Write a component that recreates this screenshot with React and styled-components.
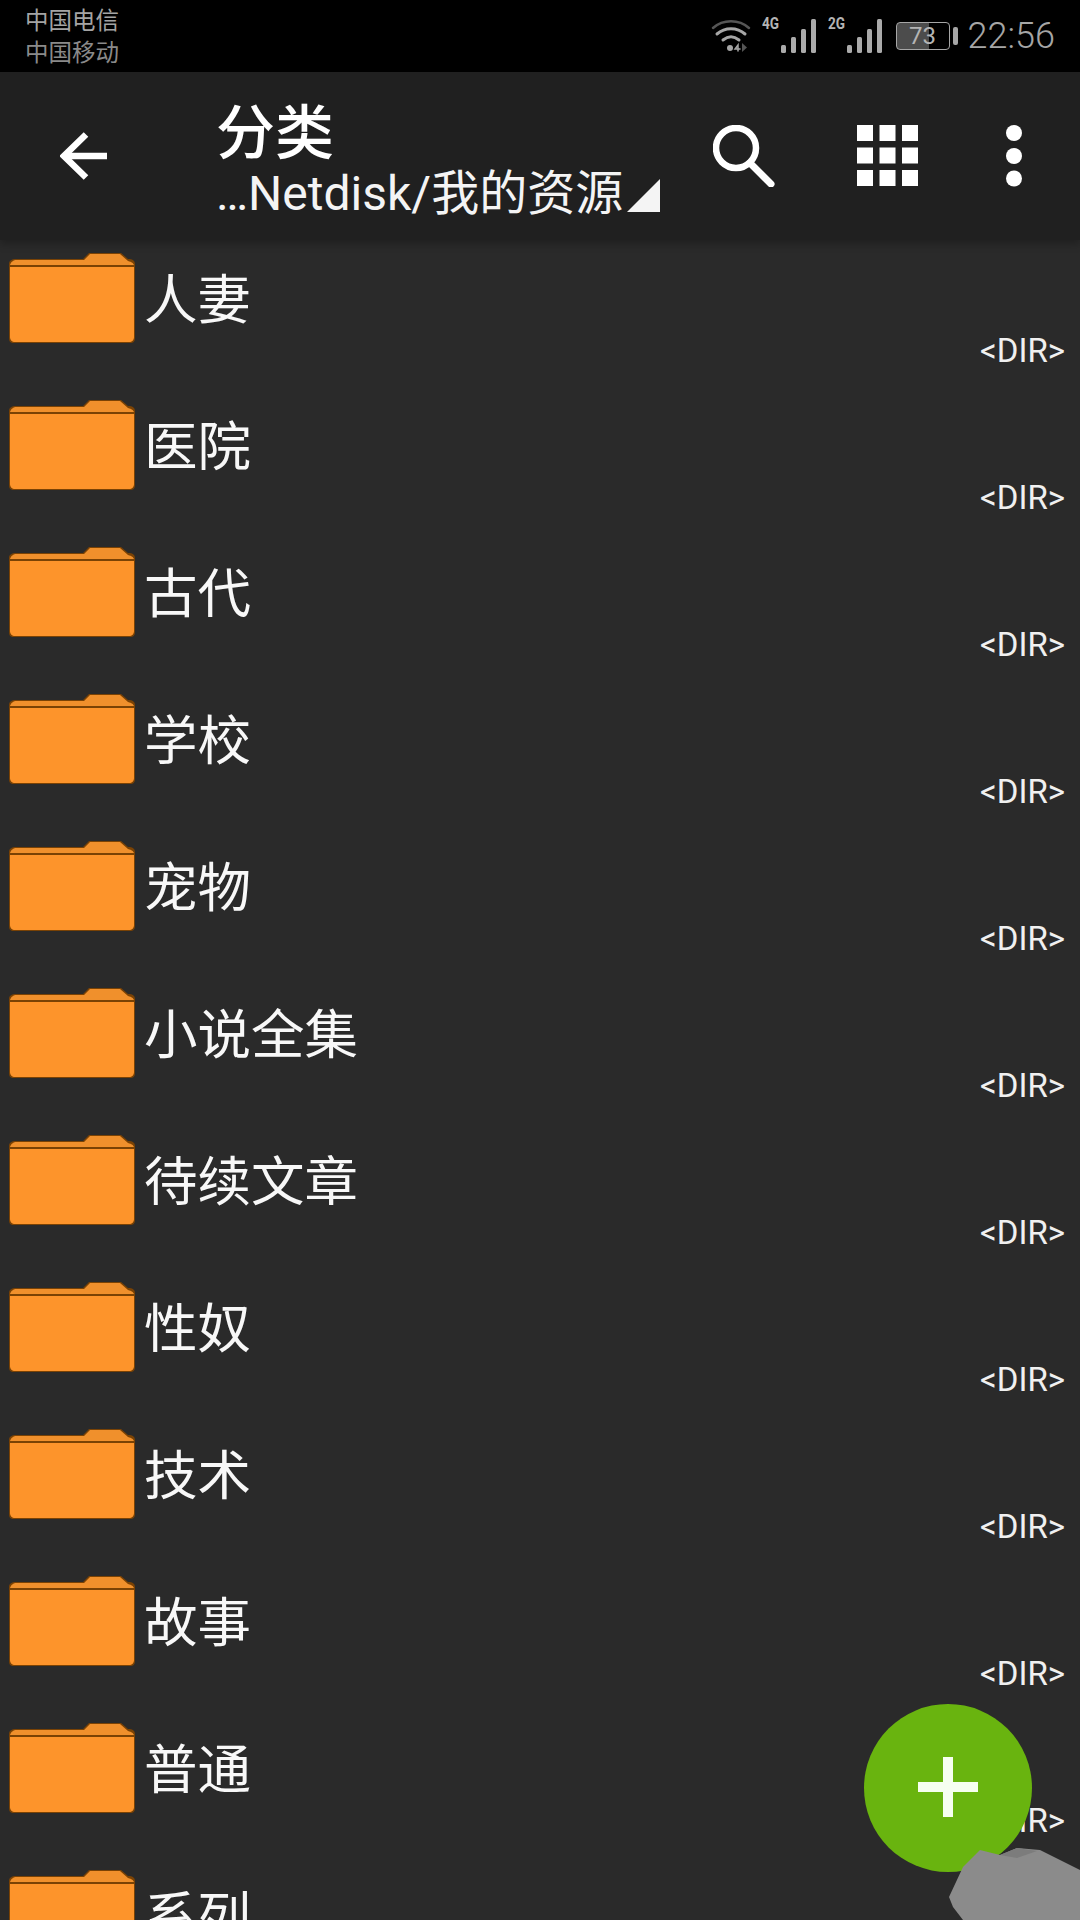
import React from 'react';
import styled, { createGlobalStyle } from 'styled-components';

const GlobalStyle = createGlobalStyle`
  html, body {
    margin: 0;
    padding: 0;
    background: #2a2a2a;
  }
  body {
    font-family: Roboto, 'Noto Sans CJK SC', sans-serif;
  }
`;

const Page = styled.div`
  position: relative;
  width: 1080px;
  height: 1920px;
  overflow: hidden;
  background: #2a2a2a;
  color: #fff;
`;

const StatusBar = styled.div`
  display: flex;
  align-items: center;
  justify-content: space-between;
  height: 72px;
  padding: 0 25px;
  background: #000;
`;

const Carriers = styled.div`
  display: flex;
  flex-direction: column;
  font-size: 23.5px;
  line-height: 32px;
  margin-top: 2px;
`;

const Carrier = styled.div`
  color: ${({ dim }) => (dim ? '#8a8a8a' : '#a4a4a4')};
`;

const StatusRight = styled.div`
  display: flex;
  align-items: center;
  color: #a6a6a6;
`;

const Signal = styled.div`
  position: relative;
  margin-left: 14px;
  margin-top: -2px;
  width: 52px;
  height: 36px;
`;

const SignalLabel = styled.span`
  position: absolute;
  top: -2px;
  left: -3px;
  font-size: 16px;
  font-weight: 700;
  line-height: 18px;
  color: #b4b4b4;
  transform: scaleX(0.85);
  transform-origin: left top;
`;

const Battery = styled.div`
  display: flex;
  align-items: center;
  margin-left: 13px;
`;

const BatteryBody = styled.div`
  width: 54px;
  height: 28px;
  box-sizing: border-box;
  border: 1px solid #a6a6a6;
  border-radius: 4px;
  display: flex;
  align-items: center;
  justify-content: center;
  font-size: 24px;
  color: #b4b4b4;
  background: linear-gradient(90deg, #4c4c4c 0, #4c4c4c 62%, transparent 62%);
`;

const BatteryTip = styled.div`
  width: 5px;
  height: 18px;
  margin-left: 3px;
  border-radius: 2px;
  background: #a6a6a6;
`;

const Clock = styled.div`
  margin-left: 10px;
  font-size: 36px;
  font-weight: 300;
  line-height: 40px;
`;

const Toolbar = styled.div`
  position: relative;
  z-index: 1;
  display: flex;
  align-items: center;
  height: 168px;
  background: #202020;
  box-shadow: 0 4px 8px rgba(0, 0, 0, 0.25);
`;

const BackButton = styled.div`
  display: flex;
  justify-content: center;
  width: 168px;
  margin-bottom: 1px;
`;

const Titles = styled.div`
  display: flex;
  flex-direction: column;
  flex: 1;
  min-width: 0;
  margin-left: 48px;
  margin-top: 9px;
`;

const Title = styled.div`
  font-size: 59px;
  font-weight: 500;
  line-height: 67px;
`;

const PathRow = styled.div`
  display: flex;
  align-items: flex-end;
  font-size: 48px;
  line-height: 54px;
  white-space: nowrap;
  color: #f4f4f4;
`;

const Triangle = styled.div`
  flex: none;
  width: 0;
  height: 0;
  margin: 0 0 9px 4px;
  border-style: solid;
  border-width: 0 0 33px 33px;
  border-color: transparent transparent #f4f4f4 transparent;
`;

const Actions = styled.div`
  display: flex;
  align-items: center;
`;

const ActionButton = styled.div`
  display: flex;
  justify-content: center;
  width: ${({ w }) => w}px;
`;

const List = styled.div`
  display: flex;
  flex-direction: column;
`;

const Row = styled.div`
  position: relative;
  display: flex;
  flex: none;
  height: 147px;
  box-sizing: border-box;
  padding: 12px 15px 0 8px;
`;

const FolderSlot = styled.div`
  flex: none;
  width: 128px;
  height: 92px;
`;

const Name = styled.div`
  flex: 1;
  margin: 11px 0 0 8px;
  font-size: 53.5px;
  line-height: 76px;
  color: #f8f8f8;
`;

const DirTag = styled.div`
  align-self: flex-start;
  margin-top: 81px;
  font-size: 33px;
  line-height: 36px;
  color: #f0f0f0;
`;

const Fab = styled.div`
  position: absolute;
  left: 864px;
  top: 1704px;
  width: 168px;
  height: 168px;
  border-radius: 50%;
  background: #69b40f;
  display: flex;
  align-items: center;
  justify-content: center;
`;

const Smudge = styled.svg`
  position: absolute;
  left: 945px;
  top: 1840px;
`;

const BackIcon = () => (
  <svg width="48" height="48" viewBox="0 0 48 48" fill="none" stroke="#fff" strokeWidth="6.5">
    <path d="M47 24H4" />
    <path d="M26 2.5L4 24l22 21.5" />
  </svg>
);

const SearchIcon = () => (
  <svg width="62" height="62" viewBox="0 0 62 62" fill="none" stroke="#fff">
    <circle cx="23" cy="23" r="20" strokeWidth="6.5" />
    <path d="M37 38l21 21" strokeWidth="7" strokeLinecap="round" />
  </svg>
);

const GridIcon = () => (
  <svg width="62" height="62" viewBox="0 0 62 62" fill="#fff">
    {[0, 22.5, 45].map((y) =>
      [0, 22.5, 45].map((x) => <rect key={`${x}-${y}`} x={x} y={y} width="16" height="16" />)
    )}
  </svg>
);

const MoreIcon = () => (
  <svg width="16" height="62" viewBox="0 0 16 62" fill="#fff">
    <circle cx="8" cy="8" r="8" />
    <circle cx="8" cy="31" r="8" />
    <circle cx="8" cy="53.5" r="8" />
  </svg>
);

const PlusIcon = () => (
  <svg width="62" height="62" viewBox="0 0 62 62" fill="#f6fff0">
    <rect x="26" y="0" width="10" height="60" />
    <rect x="1" y="25" width="60" height="10" />
  </svg>
);

const WifiIcon = () => (
  <svg width="40" height="34" viewBox="0 0 40 34" fill="none" stroke="#a6a6a6" strokeLinecap="round">
    <path d="M2 9C12 0 28 0 38 9" strokeWidth="2.5" stroke="#555" />
    <path d="M6 15c8-7 20-7 28 0" strokeWidth="3" />
    <path d="M12 21c5-4 11-4 16 0" strokeWidth="3" />
    <circle cx="19" cy="29" r="3" fill="#a6a6a6" stroke="none" />
    <path d="M31 24v9l5-4.5z" fill="#555" stroke="none" />
    <path d="M27 32v-6l-3 4h5" strokeWidth="1.5" />
  </svg>
);

const Bars = styled.svg`
  position: absolute;
  right: 0;
  bottom: 0;
`;

const SignalBars = () => (
  <Bars width="36" height="34" viewBox="0 0 36 34" fill="#aaa">
    <rect x="0" y="26" width="5" height="8" rx="1.5" />
    <rect x="10" y="18" width="5" height="16" rx="1.5" />
    <rect x="20" y="10" width="5" height="24" rx="1.5" />
    <rect x="30" y="0" width="5" height="34" rx="1.5" />
  </Bars>
);

const FolderIcon = () => (
  <svg width="128" height="92" viewBox="0 0 128 92">
    <path
      d="M9 7H75L81 1H113L120 7C125 7 127 9 127 12V86C127 90 125 91 122 91H6C2 91 1 89 1 86V12C1 9 3 7 9 7Z"
      fill="#7a4204"
    />
    <path d="M9 8H76L82 2H112L120 9C124 10 125 11 126 13H2C3 10 5 8 9 8Z" fill="#f0902c" />
    <path d="M2 15H126V85C126 88 124 90 121 90H7C4 90 2 88 2 85Z" fill="#fd942b" />
  </svg>
);

const folders = [
  '人妻',
  '医院',
  '古代',
  '学校',
  '宠物',
  '小说全集',
  '待续文章',
  '性奴',
  '技术',
  '故事',
  '普通',
  '系列',
];

export default function App() {
  return (
    <Page>
      <GlobalStyle />
      <StatusBar>
        <Carriers>
          <Carrier>中国电信</Carrier>
          <Carrier dim>中国移动</Carrier>
        </Carriers>
        <StatusRight>
          <WifiIcon />
          <Signal>
            <SignalLabel>4G</SignalLabel>
            <SignalBars />
          </Signal>
          <Signal>
            <SignalLabel>2G</SignalLabel>
            <SignalBars />
          </Signal>
          <Battery>
            <BatteryBody>73</BatteryBody>
            <BatteryTip />
          </Battery>
          <Clock>22:56</Clock>
        </StatusRight>
      </StatusBar>
      <Toolbar>
        <BackButton>
          <BackIcon />
        </BackButton>
        <Titles>
          <Title>分类</Title>
          <PathRow>
            …Netdisk/我的资源
            <Triangle />
          </PathRow>
        </Titles>
        <Actions>
          <ActionButton w={168}>
            <SearchIcon />
          </ActionButton>
          <ActionButton w={120}>
            <GridIcon />
          </ActionButton>
          <ActionButton w={132}>
            <MoreIcon />
          </ActionButton>
        </Actions>
      </Toolbar>
      <List>
        {folders.map((name) => (
          <Row key={name}>
            <FolderSlot>
              <FolderIcon />
            </FolderSlot>
            <Name>{name}</Name>
            <DirTag>{'<DIR>'}</DirTag>
          </Row>
        ))}
      </List>
      <Fab>
        <PlusIcon />
      </Fab>
      <Smudge width="135" height="80" viewBox="0 0 135 80">
        <path
          d="M4 57L18 27L35 10L55 15L72 8L95 10L135 30V80H18L8 67Z"
          fill="#8b8b8b"
        />
        <path d="M55 15L72 8L92 11L72 18Z" fill="#7c7c7c" />
      </Smudge>
    </Page>
  );
}
